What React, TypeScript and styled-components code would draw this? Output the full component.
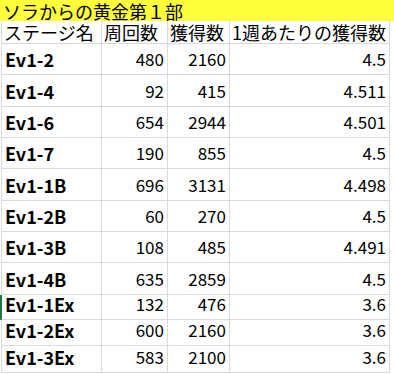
import styled, { createGlobalStyle } from "styled-components";

const GlobalStyle = createGlobalStyle`
  html, body {
    margin: 0;
    padding: 0;
    background: #ffffff;
  }
  body {
    font-family: "Noto Sans CJK JP", "Noto Sans", sans-serif;
    color: #000000;
  }
`;

const COLUMNS = "101px 66px 62px 160px";

const Sheet = styled.div`
  width: 394px;
  height: 374px;
  overflow: hidden;
  background: #ffffff;
`;

const TitleBar = styled.div`
  height: 21px;
  background: #ffff3c;
  display: flex;
  align-items: center;
  padding-left: 3px;
  font-size: 18px;
  line-height: 20px;
  white-space: nowrap;
`;

const Row = styled.div<{ h: number }>`
  display: grid;
  grid-template-columns: ${COLUMNS};
  height: ${(p) => p.h}px;
  padding-left: 1px;
`;

const Cell = styled.div<{ align?: "left" | "right"; first?: boolean; marked?: boolean }>`
  display: flex;
  align-items: flex-end;
  justify-content: ${(p) => (p.align === "right" ? "flex-end" : "flex-start")};
  padding: 0 ${(p) => (p.align === "right" ? "3px" : "0")} 0 ${(p) => (p.first ? "2px" : "2px")};
  border-right: 1px solid #d9d9d9;
  border-bottom: 1px solid #d9d9d9;
  border-left: ${(p) => (p.first ? `1px solid ${p.marked ? "#217346" : "#d9d9d9"}` : "none")};
  box-shadow: ${(p) => (p.marked ? "-1px 0 0 #217346" : "none")};
  white-space: nowrap;
`;

const HeadText = styled.span`
  font-size: 18px;
  line-height: 20px;
  margin-bottom: 1px;
`;

const StageText = styled.span`
  font-size: 18px;
  font-weight: 700;
  line-height: 18px;
  margin-bottom: 6px;
  margin-left: 1px;
`;

const NumText = styled.span`
  font-size: 17px;
  line-height: 18px;
  margin-bottom: 6px;
`;

type Entry = { stage: string; runs: string; gain: string; perRun: string; h: number; marked?: boolean };

const rows: Entry[] = [
  { stage: "Ev1-2", runs: "480", gain: "2160", perRun: "4.5", h: 31 },
  { stage: "Ev1-4", runs: "92", gain: "415", perRun: "4.511", h: 32 },
  { stage: "Ev1-6", runs: "654", gain: "2944", perRun: "4.501", h: 31 },
  { stage: "Ev1-7", runs: "190", gain: "855", perRun: "4.5", h: 31 },
  { stage: "Ev1-1B", runs: "696", gain: "3131", perRun: "4.498", h: 32 },
  { stage: "Ev1-2B", runs: "60", gain: "270", perRun: "4.5", h: 31 },
  { stage: "Ev1-3B", runs: "108", gain: "485", perRun: "4.491", h: 31 },
  { stage: "Ev1-4B", runs: "635", gain: "2859", perRun: "4.5", h: 32 },
  { stage: "Ev1-1Ex", runs: "132", gain: "476", perRun: "3.6", h: 25, marked: true },
  { stage: "Ev1-2Ex", runs: "600", gain: "2160", perRun: "3.6", h: 26 },
  { stage: "Ev1-3Ex", runs: "583", gain: "2100", perRun: "3.6", h: 27 },
];

export default function App() {
  return (
    <>
      <GlobalStyle />
      <Sheet>
        <TitleBar>ソラからの黄金第１部</TitleBar>
        <Row h={23}>
          <Cell first>
            <HeadText>ステージ名</HeadText>
          </Cell>
          <Cell>
            <HeadText>周回数</HeadText>
          </Cell>
          <Cell>
            <HeadText>獲得数</HeadText>
          </Cell>
          <Cell>
            <HeadText>1週あたりの獲得数</HeadText>
          </Cell>
        </Row>
        {rows.map((r) => (
          <Row key={r.stage} h={r.h}>
            <Cell first marked={r.marked}>
              <StageText>{r.stage}</StageText>
            </Cell>
            <Cell align="right">
              <NumText>{r.runs}</NumText>
            </Cell>
            <Cell align="right">
              <NumText>{r.gain}</NumText>
            </Cell>
            <Cell align="right">
              <NumText>{r.perRun}</NumText>
            </Cell>
          </Row>
        ))}
      </Sheet>
    </>
  );
}
